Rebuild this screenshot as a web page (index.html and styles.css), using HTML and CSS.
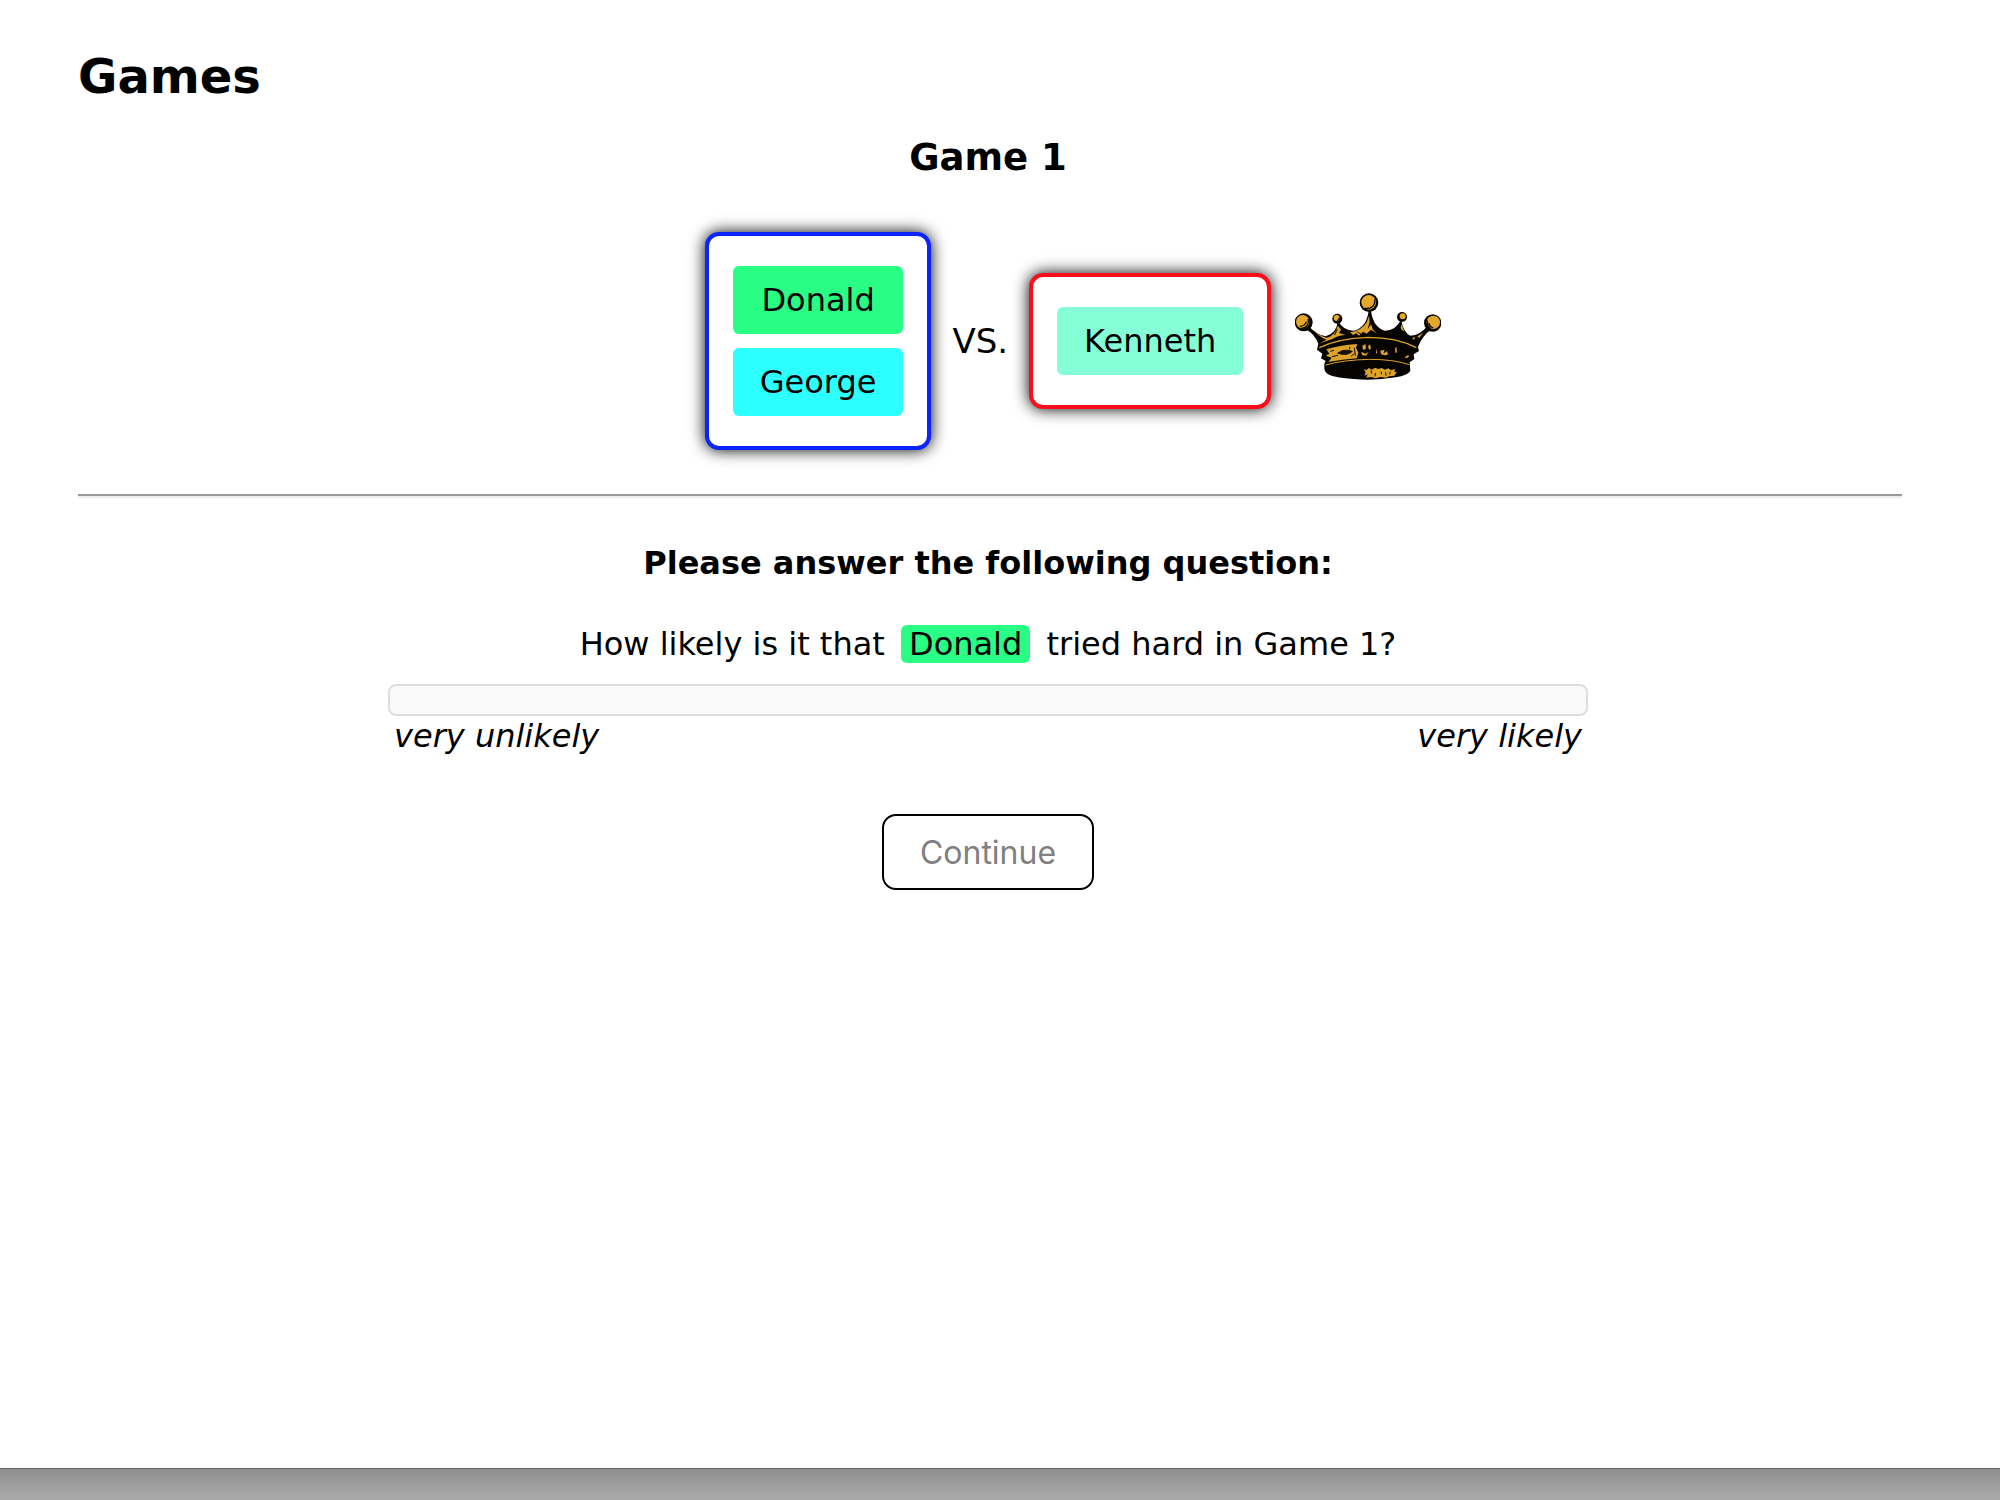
FILE: index.html
```html
<!DOCTYPE html>
<html lang="en">
<head>
<meta charset="utf-8">
<meta name="viewport" content="width=device-width, initial-scale=1">
<title>Games</title>
<link rel="stylesheet" href="styles.css">
</head>
<body>
<main class="page">
  <h1 class="page-title">Games</h1>
  <section class="game">
    <h2 class="game-title">Game 1</h2>
    <div class="match">
      <div class="teams">
        <div class="team team-blue">
          <span class="player green">Donald</span>
          <span class="player cyan">George</span>
        </div>
        <span class="versus">VS.</span>
        <div class="team team-red">
          <span class="player mint">Kenneth</span>
        </div>
      </div>
      <svg class="crown" viewBox="48 38 438 288" role="img" aria-label="Winner">
        <path d="M88 136 Q112 163 140 168 Q172 160 177 122 Q194 152 225 151 Q262 142 269 92 H276 Q283 142 318 151 Q351 150 366 118 Q374 158 394 166 Q424 164 446 136 L458 146 Q430 166 417 200 L420 212 L404 222 L406 236 L392 246 L394 272 Q386 285 350 291 Q310 298 265 298 Q200 297 160 287 Q138 281 136 266 L136 250 L140 242 L126 234 L130 220 L114 208 L118 190 Q108 164 84 148Z" fill="#050400"/>
        <g fill="#0a0700">
          <circle cx="74" cy="126" r="27"/><circle cx="270" cy="67" r="28"/><circle cx="461" cy="128" r="26"/><circle cx="175" cy="115" r="15"/><circle cx="369" cy="110" r="15"/>
        </g>
        <g fill="#e4a82b">
          <circle cx="71" cy="124" r="20"/><circle cx="269" cy="66" r="22"/><circle cx="463" cy="126" r="20"/><circle cx="173" cy="113" r="9"/><circle cx="371" cy="108" r="9"/>
        </g>
        <g fill="none" stroke="#0a0700" stroke-width="4">
          <path d="M66 144 Q90 144 88 116M62 138 Q78 138 82 124M256 84 Q288 88 288 56M455 145 Q443 137 445 120M463 143 Q450 138 450 128M175 121 Q181 119 181 112"/>
        </g>
        <g fill="#dca22a">
          <path d="M98 140 Q115 165 142 172 Q166 168 177 136 L186 148 L180 158 L200 164 Q180 164 160 176 L132 186 L120 190 L142 178 Q116 168 98 140Z"/>
          <path d="M213 156 Q245 154 263 126 L270 106 L272 124 L266 146 L276 132 L282 148 L294 160 L276 148 L263 160 L252 154 L240 166 L232 159 L222 164Z"/>
          <path d="M142 207 Q180 195 235 191 L231 202 L238 217 L233 234 Q190 238 148 245 L158 232 L140 226 L151 220Z"/>
          <path d="M254 266 L262 269 L270 263 L278 268 L288 262 L298 266 L308 263 L318 268 L328 264 L336 270 L348 266 L346 276 L354 274 L346 286 L330 288 L322 292 L304 290 L290 294 L276 290 L262 292 L266 282 L256 286 L260 276Z"/>
          <path d="M250 196l9-5 2 14-9 4ZM247 214l12 6 10-5-8 11-12-2ZM267 198l6-6 3 13-6 3ZM292 204l3 16-4-2ZM304 211l13-3-4 12 11-8 3 11-10 2-11-3ZM348 204l4-5 2 17-5 2ZM377 232l9-8 5 4-8 6ZM365 142l3-10 8 22-8-6ZM399 174l10-5-4 9ZM414 170l18-14-10 16Z"/>
        </g>
        <g fill="none" stroke="#dca22a" stroke-width="4">
          <path d="M121 202 Q178 174 267 171 Q354 171 412 202"/>
          <path d="M140 254 Q190 239 272 237 Q345 237 391 253" stroke-width="3"/>
        </g>
        <g fill="none" stroke="#171005" stroke-width="3">
          <path d="M154 213l11-3M159 229l18-4M213 199l-2 8M216 228l10-8M226 202l3 24M175 146l-8 18M235 155l12 7M276 270l2 10M290 278l-2 10M306 274l2 8M320 276l1 10M334 274l-2 8"/>
          <path d="M176 219 Q192 204 220 213 Q206 228 176 219Z" fill="#171005"/>
        </g>
      </svg>
    </div>
  </section>
  <hr class="divider">
  <form class="question">
    <h3 class="prompt">Please answer the following question:</h3>
    <label class="question-text" for="effort">How likely is it that <span class="mention green">Donald</span> tried hard in Game 1?</label>
    <input class="slider" id="effort" type="range" min="0" max="100">
    <div class="scale"><span>very unlikely</span><span>very likely</span></div>
    <button class="continue" type="button" disabled>Continue</button>
  </form>
</main>
<footer class="window-edge"></footer>
</body>
</html>
```
FILE: styles.css
```css
* { box-sizing: border-box; }

body {
  margin: 0;
  min-height: 100vh;
  display: flex;
  flex-direction: column;
  background: #fff;
  color: #000;
  font-family: "DejaVu Sans", Verdana, sans-serif;
  font-size: 32px;
  line-height: 40px;
}

h1, h2, h3 { margin: 0; font-weight: bold; }

.page { flex: 1; padding: 48px 98px 40px 78px; }
.page-title { font-size: 48px; line-height: 56px; }
.game, .question { padding-right: 4px; }

.game-title {
  margin-top: 32px;
  font-size: 37px;
  line-height: 44px;
  text-align: center;
}

.match {
  display: grid;
  grid-template-columns: 1fr auto 1fr;
  align-items: center;
  column-gap: 24px;
  margin-top: 52px;
}
.teams {
  grid-column: 2;
  display: flex;
  align-items: center;
  gap: 21px;
}
.team {
  display: flex;
  flex-direction: column;
  gap: 14px;
  padding: 30px 24px;
  border: 4px solid;
  border-radius: 14px;
  background: #fff;
  box-shadow: 0 0 16px #000;
}
.team-blue { border-color: #0b24fb; }
.team-red { border-color: #fc0d1b; }
.versus { font-size: 34px; }

.player {
  padding: 14px 27px;
  border-radius: 6px;
  text-align: center;
}
.green { background: #29fd83; }
.cyan { background: #2dffff; }
.mint { background: #85ffd6; }

.crown { width: 146px; height: 96px; }

.divider {
  height: 4px;
  margin: 44px 0 45px;
  border: 0;
  border-top: 2px solid #9a9a9a;
  border-bottom: 2px solid #eee;
}

.question {
  display: flex;
  flex-direction: column;
  align-items: center;
}
.prompt { font-size: 32px; line-height: 40px; }
.question-text { margin-top: 41px; }
.mention {
  margin: 0 6px;
  padding: 0 8px;
  border-radius: 6px;
}

.slider {
  appearance: none;
  width: 100%;
  max-width: 1200px;
  height: 32px;
  margin: 20px 0 0;
  border: 2px solid #ddd;
  border-radius: 8px;
  background: #f9f9f9;
}
.slider::-webkit-slider-thumb { appearance: none; width: 1px; opacity: 0; }

.scale {
  display: flex;
  justify-content: space-between;
  width: 100%;
  max-width: 1200px;
  padding: 0 6px;
  font-style: italic;
}

.continue {
  margin-top: 58px;
  padding: 17px 36px 15px;
  border: 2px solid #000;
  border-radius: 14px;
  background: #fff;
  color: #808080;
  font: 32px/40px Inter, sans-serif;
}

.window-edge {
  height: 32px;
  border-top: 1px solid #666;
  background: linear-gradient(#8f8f8f, #ababab);
}
```
